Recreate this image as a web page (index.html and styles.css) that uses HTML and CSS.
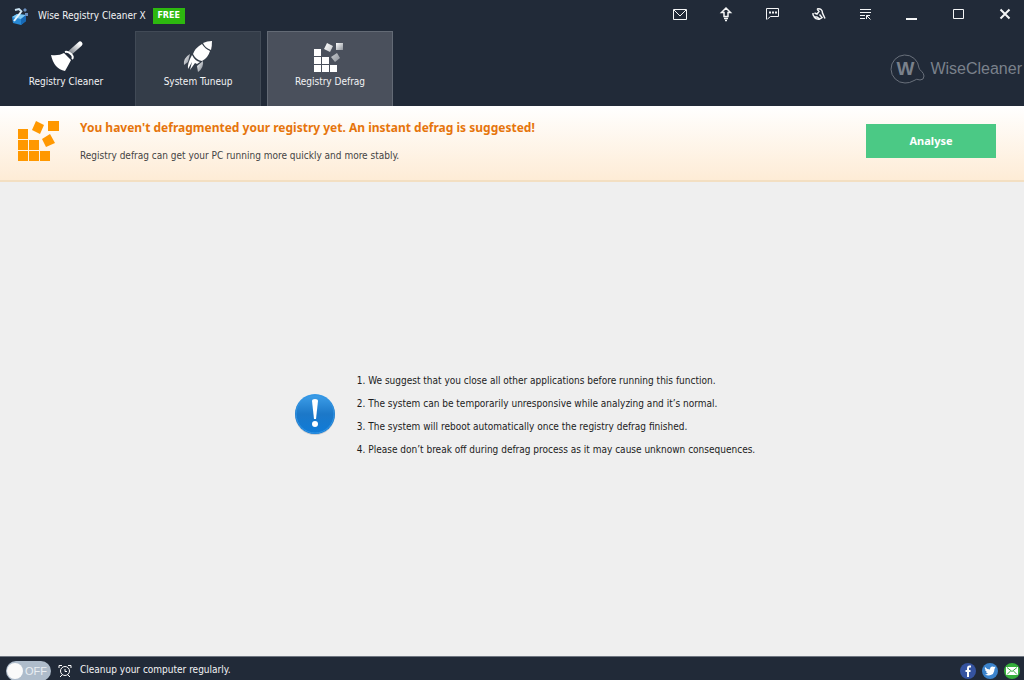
FILE: index.html
```html
<!DOCTYPE html>
<html lang="en">
<head>
  <meta charset="UTF-8" />
  <meta name="viewport" content="width=device-width, initial-scale=1.0"/>
  <title>Wise Registry Cleaner X</title>
  <link rel="stylesheet" href="styles.css">
</head>
<body>

  <header class="header">
    <div class="title-bar">
      <svg class="app-icon" width="18" height="18" viewBox="0 0 18 18">
        <path d="M1 10l5-3 9 1v6l-5 4-8-2z" fill="#2788d4"/>
        <path d="M1 10l5-3 9 1-5 4z" fill="#7cc7f2"/>
        <path d="M10 12l5-4v6l-5 4z" fill="#1769b5"/>
        <path d="M3 14l7-9" stroke="#e8f4fb" stroke-width="2"/>
        <path d="M4 3l4-1 3 3" fill="none" stroke="#c9e2f2" stroke-width="2"/>
        <path d="M12 3l2-2 2 2-2 2zM14 6h3v3h-3z" fill="#6b8fc0"/>
      </svg>
      <h1 class="app-name">Wise Registry Cleaner X</h1>
      <span class="free-badge">FREE</span>

      <div class="window-buttons">
        <button type="button" aria-label="Mail">
          <svg width="16" height="16" viewBox="0 0 16 16"><path d="M1.500 3.500h13v10h-13zM2 4l6 6 6-6" /></svg>
        </button>
        <button type="button" aria-label="Update">
          <svg width="16" height="16" viewBox="0 0 16 16"><path d="M8 2L3.500 6.500H6v4h4v-4h2.500zM6 12.500h4M7 14.500h2" stroke-width="1.500"/></svg>
        </button>
        <button type="button" aria-label="Feedback">
          <svg width="16" height="16" viewBox="0 0 16 16"><path d="M1.500 13.500v-11h12v8h-8l-3 2.500"/><path d="M4 6.500h2M7 6.500h2M10 6.500h2" stroke-width="2"/></svg>
        </button>
        <button type="button" aria-label="Tools">
          <svg width="16" height="16" viewBox="0 0 16 16"><path d="M6 3C9.500 2 11.500 4 11.500 7l2.500 5.500M6 3l2 2.500L6 8 3.500 7M2 7c-.5 3 1.500 4.500 4 4l3 2M3 11c1.500 2 3.500 2.500 6 2M8.500 8.500l2.500 3-2 1.500" stroke-width="1.500"/></svg>
        </button>
        <button type="button" aria-label="Menu">
          <svg width="16" height="16" viewBox="0 0 16 16"><path d="M2 3.500h11M2 6.500h11M2 9.500h5M2 12.500h5M8.500 13V9.500H12M8.500 9.500l4 4"/></svg>
        </button>
        <button type="button" aria-label="Minimize">
          <svg width="16" height="16" viewBox="0 0 16 16"><path d="M2 13h11" stroke-width="2"/></svg>
        </button>
        <button type="button" aria-label="Maximize">
          <svg width="16" height="16" viewBox="0 0 16 16"><path d="M2.500 3.500h10v9h-10z"/></svg>
        </button>
        <button type="button" aria-label="Close">
          <svg width="16" height="16" viewBox="0 0 16 16"><path d="M3.500 3.500l9 9M12.500 3.500l-9 9" stroke-width="2"/></svg>
        </button>
      </div>
    </div>

    <div class="nav-bar">
      <nav class="tabs">
        <a href="#cleaner" class="tab">
          <svg width="36" height="34" viewBox="0 0 36 34">
            <defs>
              <linearGradient id="handle" x1="0" y1="1" x2="1" y2="0">
                <stop offset="0" stop-color="#8a8f96"/><stop offset="1" stop-color="#ffffff"/>
              </linearGradient>
            </defs>
            <path d="M23 12L32 4" stroke="url(#handle)" stroke-width="5" stroke-linecap="round"/>
            <path d="M3 15q8 1 13-2l7 7q-2 4-6 11Q6 29 3 15z" fill="#fff"/>
            <path d="M17 12q3-1 6 2t1 5" fill="none" stroke="#fff" stroke-width="2"/>
          </svg>
          <span>Registry Cleaner</span>
        </a>
        <a href="#tuneup" class="tab tab-raised">
          <svg width="36" height="34" viewBox="0 0 36 34">
            <defs>
              <linearGradient id="fin" x1="0" y1="0" x2="1" y2="1">
                <stop offset="0" stop-color="#ffffff"/><stop offset="1" stop-color="#747c87"/>
              </linearGradient>
            </defs>
            <path d="M23 3q4-2 9-2 0 5-1 9-6-2-8-7z" fill="#fff"/>
            <path d="M22 4q3 5 8 7-2 7-8 10-6-1-9-7 2-6 9-10z" fill="#fff"/>
            <path d="M12 15q3 6 8 7l-3 2-2-1-5 7 2-8-4 7q-1-5 4-14z" fill="#fff"/>
            <path d="M10 14q-7 4-6 11l4-3z" fill="url(#fin)"/>
            <path d="M23 21q1 7-5 11l-1-6z" fill="url(#fin)"/>
          </svg>
          <span>System Tuneup</span>
        </a>
        <a href="#defrag" class="tab tab-raised tab-active">
          <svg width="36" height="34" viewBox="0 0 36 34">
            <defs>
              <linearGradient id="cube" x1="0" y1="0" x2="1" y2="1">
                <stop offset="0" stop-color="#ffffff"/><stop offset="1" stop-color="#8d929a"/>
              </linearGradient>
            </defs>
            <path d="M2 9h7v7H2zM2 17h7v7H2zM10 17h7v7h-7zM2 25h7v7H2zM10 25h7v7h-7zM18 25h7v7h-7z" fill="#fff"/>
            <path d="M15 3l6 3-3 6-6-3zM25 13l3 5-5 4-4-5z" fill="url(#cube)"/>
            <path d="M24 3h7v7h-7z" fill="url(#cube)"/>
          </svg>
          <span>Registry Defrag</span>
        </a>
      </nav>
      <a href="#home" class="brand">
        <span class="brand-mark">
          <svg width="36" height="32" viewBox="0 0 36 32">
            <path d="M23 28Q20 30 15 30A14 14 0 1 1 29 15c0 2 5 4 5 8q0 4-4 4-3-2-7 1" fill="none" stroke="#69707b"/>
          </svg>
          <b class="brand-letter">W</b>
        </span>
        <span class="brand-name">WiseCleaner</span>
      </a>
    </div>
  </header>

  <section class="banner">
    <svg width="42" height="42" viewBox="0 0 42 42" fill="#ff9800">
      <path d="M1 9h10v10H1zM1 20h10v10H1zM12 20h10v10H12zM1 31h10v10H1zM12 31h10v10H12zM23 31h10v10H23z"/>
      <path d="M31 1h11v10H31zM19 1l8 4-4 9-8-4zM33 14l5 9-9 4-4-8z"/>
    </svg>
    <div class="banner-text">
      <h2>You haven't defragmented your registry yet. An instant defrag is suggested!</h2>
      <p>Registry defrag can get your PC running more quickly and more stably.</p>
    </div>
    <button type="button" class="analyse-button">Analyse</button>
  </section>

  <main class="content">
    <svg width="44" height="46" viewBox="0 0 44 46">
      <defs>
        <linearGradient id="ball" x1="0" y1="0" x2="0" y2="1">
          <stop offset="0" stop-color="#3fa0ea"/><stop offset="0.500" stop-color="#1c78c8"/><stop offset="1" stop-color="#0f7bd8"/>
        </linearGradient>
      </defs>
      <circle cx="22" cy="22" r="20" fill="#c9ccd0"/>
      <circle cx="22" cy="21" r="20" fill="url(#ball)"/>
      <circle cx="22" cy="21" r="19" fill="none" stroke="#3295e4"/>
      <path d="M19 8q0-2 3-2t3 2l-2 18h-2z" fill="#fff"/>
      <circle cx="22" cy="31" r="3" fill="#fff"/>
    </svg>
    <ol class="notes">
      <li>We suggest that you close all other applications before running this function.</li>
      <li>The system can be temporarily unresponsive while analyzing and it’s normal.</li>
      <li>The system will reboot automatically once the registry defrag finished.</li>
      <li>Please don’t break off during defrag process as it may cause unknown consequences.</li>
    </ol>
  </main>

  <footer class="footer">
    <label class="switch">
      <input type="checkbox" aria-label="Scheduled cleanup">
      <span class="switch-text">OFF</span>
    </label>
    <svg width="14" height="14" viewBox="0 0 14 14" fill="none" stroke="#fff">
      <circle cx="7" cy="7" r="4.500"/>
      <path d="M7 5v2.500h2M1 4V1.500h3M13 4V1.500h-3M4 11l-2 2M10 11l2 2"/>
    </svg>
    <p>Cleanup your computer regularly.</p>
    <div class="social">
      <a href="#facebook" aria-label="Facebook">
        <svg width="16" height="16" viewBox="0 0 16 16">
          <circle cx="8" cy="8" r="8" fill="#3553a0"/>
          <path d="M11 3.500H9.500Q8 3.500 8 5.500V14M5.500 8h5" fill="none" stroke="#fff" stroke-width="2"/>
        </svg>
      </a>
      <a href="#twitter" aria-label="Twitter">
        <svg width="16" height="16" viewBox="0 0 16 16">
          <circle cx="8" cy="8" r="8" fill="#3b83cc"/>
          <path d="M3 4q2 2.500 5 2.500Q8 3.500 10.500 3.500q1 0 1.500.5l1.500-.5-.7 1.200.9-.2-1.200 1.300Q12.500 12 7 12.500q-2.500 0-4-1 2 0 3-1-1.700-.3-2-1.800h1Q3 8 3 6.500l.8.200Q2.300 5.500 3 4z" fill="#fff"/>
        </svg>
      </a>
      <a href="#mail" aria-label="E-mail">
        <svg width="16" height="16" viewBox="0 0 16 16">
          <circle cx="8" cy="8" r="8" fill="#35ae3b"/>
          <path d="M2 4h12v8H2z" fill="#fff"/>
          <path d="M3 4.500l5 4 5-4M3 11.500L6.500 8M13 11.500L9.500 8" fill="none" stroke="#35ae3b"/>
        </svg>
      </a>
    </div>
  </footer>

</body>
</html>
```
FILE: styles.css
```css
* {
  box-sizing: border-box;
  margin: 0;
  padding: 0;
}

body {
  display: flex;
  flex-direction: column;
  height: 100vh;
  overflow: hidden;
  background: #efefef;
  color: #1c1c1c;
  font-family: 'DejaVu Sans Condensed', Tahoma, sans-serif;
  font-size: 10px;
  line-height: 16px;
}

svg {
  display: block;
  flex-shrink: 0;
}

a {
  color: inherit;
  text-decoration: none;
}

button {
  border: none;
  font: inherit;
  cursor: pointer;
}

/* Header */
.header {
  background: #212a38;
  color: #f2f3f5;
}

.title-bar {
  display: flex;
  align-items: center;
  height: 31px;
  padding: 0 4px 0 11px;
}

.app-name {
  margin: 0 7px 0 9px;
  font-size: 10px;
  font-weight: normal;
}

.free-badge {
  width: 32px;
  background: #2db80f;
  color: #fff;
  font-family: 'DejaVu Sans', sans-serif;
  font-size: 8px;
  font-weight: bold;
  text-align: center;
}

.window-buttons {
  display: flex;
  justify-content: space-between;
  width: 355px;
  margin-left: auto;
}

.window-buttons button {
  display: flex;
  align-items: center;
  justify-content: center;
  width: 30px;
  height: 28px;
  padding-bottom: 3px;
  background: none;
}

.window-buttons svg {
  fill: none;
  stroke: #f4f5f6;
}

.nav-bar {
  display: flex;
  justify-content: space-between;
  align-items: center;
  padding: 0 2px 0 3px;
}

.tabs {
  display: flex;
  gap: 6px;
}

.tab {
  display: flex;
  flex-direction: column;
  align-items: center;
  width: 126px;
  height: 75px;
  padding-top: 8px;
  border: 1px solid transparent;
  border-bottom: none;
}

.tab-raised {
  background: #343d49;
  border-color: #414a56;
}

.tab-active {
  background: #4a505c;
  border-color: #636a75;
}

.brand {
  display: flex;
  align-items: center;
  gap: 4px;
  color: #7a818b;
  font-family: 'Liberation Sans', Arial, sans-serif;
}

.brand-mark {
  display: grid;
}

.brand-mark svg,
.brand-letter {
  grid-area: 1 / 1;
}

.brand-letter {
  width: 30px;
  font-size: 19px;
  line-height: 32px;
  text-align: center;
}

.brand-name {
  font-size: 16px;
}

/* Banner */
.banner {
  display: flex;
  align-items: center;
  height: 76px;
  padding: 0 28px 4px 17px;
  background: linear-gradient(#ffffff, #feecd6);
  border-bottom: 2px solid #f3dfc2;
}

.banner-text {
  padding-top: 2px;
  margin-left: 21px;
}

.banner-text h2 {
  margin-bottom: 12px;
  color: #e6750c;
  font-family: 'Noto Sans', Tahoma, sans-serif;
  font-size: 12px;
  line-height: 16px;
}

.banner-text p {
  color: #444;
}

.analyse-button {
  width: 130px;
  height: 34px;
  margin-left: auto;
  background: #4bc985;
  color: #fff;
  font-family: 'Noto Sans', Tahoma, sans-serif;
  font-size: 11px;
  font-weight: bold;
}

/* Content */
.content {
  display: flex;
  flex: 1;
  align-items: center;
  justify-content: center;
  gap: 20px;
  padding: 0 0 7px 24px;
}

.notes {
  display: grid;
  gap: 7px;
  list-style-position: inside;
}

/* Footer */
.footer {
  display: flex;
  align-items: flex-start;
  height: 24px;
  padding: 4px 4px 0 6px;
  background: #212a38;
  border-top: 1px solid #6f7681;
  color: #f2f3f5;
}

.footer > svg {
  margin: 3px 8px 0 7px;
}

.footer p {
  margin-top: 1px;
}

.switch {
  display: flex;
  align-items: center;
  justify-content: space-between;
  width: 45px;
  height: 20px;
  padding: 0 4px 0 1px;
  border-radius: 10px;
  background: #aebccb;
}

.switch input {
  appearance: none;
  width: 16px;
  height: 16px;
  border-radius: 50%;
  background: #fafafa;
}

.switch-text {
  color: #e9eef3;
  font-family: 'Liberation Sans', Arial, sans-serif;
  font-size: 11px;
}

.social {
  display: flex;
  gap: 6px;
  margin: 2px 0 0 auto;
}
```
